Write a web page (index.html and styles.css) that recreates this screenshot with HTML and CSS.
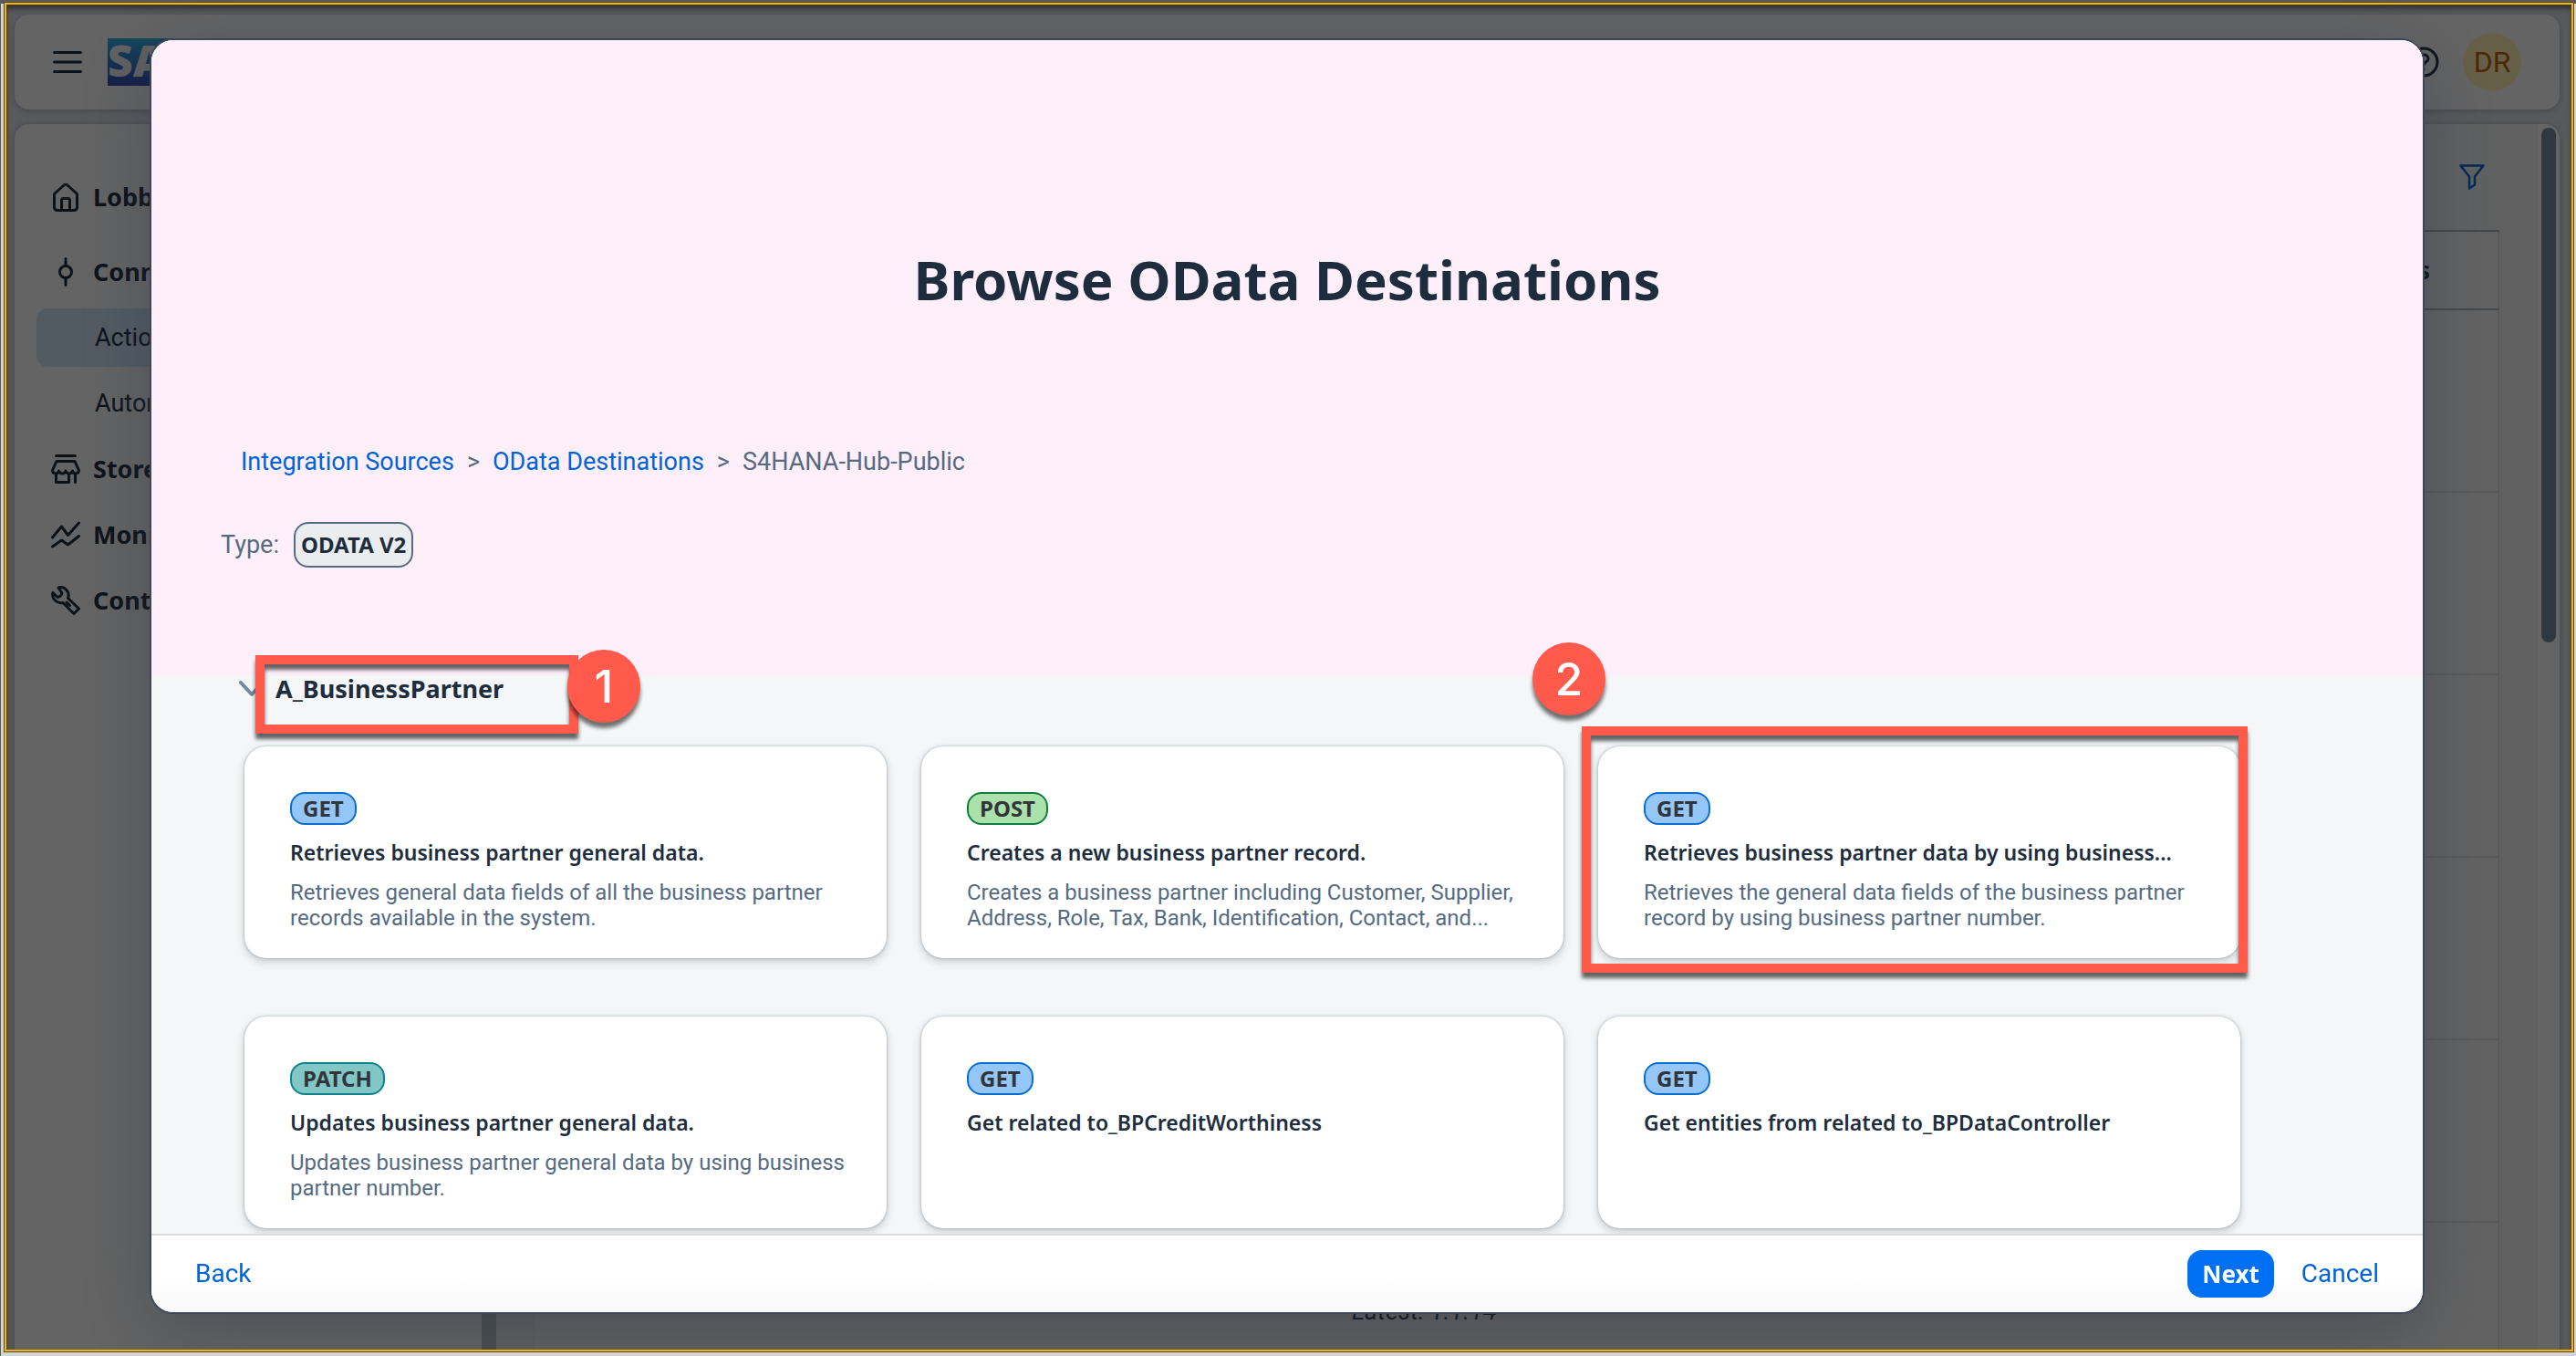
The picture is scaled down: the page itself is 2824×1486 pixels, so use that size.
FILE: index.html
```html
<!DOCTYPE html>
<html lang="en">
<head>
<meta charset="utf-8">
<title>Browse OData Destinations</title>
<link rel="stylesheet" href="styles.css">
</head>
<body>
<div class="app">
  <header class="shell">
    <button class="icon-button" type="button" aria-label="Menu">
      <svg width="32" height="28" viewBox="0 0 32 28" fill="none" stroke="currentColor" stroke-width="3" stroke-linecap="round"><path d="M1.5 3.5h29M1.5 14h29M1.5 24.5h29"/></svg>
    </button>
    <svg class="logo" width="104" height="52" viewBox="0 0 104 52" role="img" aria-label="SAP">
      <defs><linearGradient id="sap" x1="0" y1="0" x2="0" y2="1"><stop offset="0" stop-color="#30b0e8"/><stop offset="1" stop-color="#3048b0"/></linearGradient></defs>
      <path d="M0 0h104L52 52H0z" fill="url(#sap)"/>
      <text x="0" y="42" class="logo-text">SA</text>
    </svg>
    <div class="shell-end">
      <button class="icon-button" type="button" aria-label="Help">
        <svg width="34" height="34" viewBox="0 0 34 34" fill="none" stroke="currentColor" stroke-width="3" stroke-linecap="round"><circle cx="17" cy="17" r="15"/><path d="M12.5 13.500c0-6 9.500-6 9.500 0 0 3.500-5 3.500-5 7M17 24.500v.5"/></svg>
      </button>
      <button class="avatar" type="button">DR</button>
    </div>
  </header>
  <div class="workspace">
    <nav class="side">
      <a class="nav-item nav-home" href="#"><svg class="nav-icon" viewBox="0 0 32 32"><path d="M3.500 12.500 14 3q2-1.500 4 0l10.500 9.500V27q0 3.500-3.500 3.500H7q-3.500 0-3.500-3.500zM11.500 30V19.500q0-2 2-2h5q2 0 2 2V30"/></svg>Lobb</a>
      <a class="nav-item" href="#"><svg class="nav-icon" viewBox="0 0 32 32"><circle cx="16" cy="16" r="6.500"/><path d="M16 1.500v8M16 22.500v8"/></svg>Conn</a>
      <a class="nav-item nav-sub nav-current" href="#">Actio</a>
      <a class="nav-item nav-sub" href="#">Autom</a>
      <a class="nav-item" href="#"><svg class="nav-icon" viewBox="0 0 32 32"><path d="M5.500 1.500h21M6 7.500h20l4.500 10q0 3-3.500 3.500-3 0-3.500-3-1 3-3.700 3T16 18q-1 3-3.700 3T8.500 18q-.500 3-3.500 3-3.500-.500-3.500-3.500zM5.500 21v9.500h14V21M26.500 21v9.500"/></svg>Store</a>
      <a class="nav-item" href="#"><svg class="nav-icon" viewBox="0 0 32 32"><path d="M1.500 19 11.500 7l7 9.500L30.500 3M1.500 29l10-7 7 5L30.500 17.500"/></svg>Moni</a>
      <a class="nav-item" href="#"><svg class="nav-icon" viewBox="0 0 32 32"><path d="M8 2c7-2 13 5 10.500 11.500l12 11.500-5.500 5.500-12-12C7 20 0 14 2 7.500l5 5q4-.500 5-4.500zM17 18l3.500 3.500"/></svg>Cont</a>
    </nav>
    <div class="splitter"></div>
    <main class="content">
      <div class="toolbar">
        <button class="icon-button filter" type="button" aria-label="Filter">
          <svg width="28" height="28" viewBox="0 0 28 28" fill="none" stroke="currentColor" stroke-width="2.500" stroke-linejoin="round"><path d="M1.500 1.500h25L17 13.500v9l-6 4v-13z"/></svg>
        </button>
      </div>
      <table class="grid">
        <thead><tr><th>s</th></tr></thead>
        <tbody>
          <tr><td></td></tr><tr><td></td></tr><tr><td></td></tr><tr><td></td></tr><tr><td></td></tr>
          <tr><td class="latest"><em>Latest: 1.1.14</em></td></tr>
        </tbody>
      </table>
    </main>
    <div class="scroll-track"><div class="scroll-thumb"></div></div>
  </div>
</div>

<div class="backdrop"></div>

<section class="dialog" role="dialog" aria-labelledby="dialog-title">
  <div class="dialog-body">
    <div class="hero">
      <h1 id="dialog-title">Browse OData Destinations</h1>
      <nav class="crumbs" aria-label="Breadcrumb">
        <a href="#">Integration Sources</a><span>&gt;</span><a href="#">OData Destinations</a><span>&gt;</span><span>S4HANA-Hub-Public</span>
      </nav>
      <div class="type"><span>Type:</span><span class="chip">ODATA V2</span></div>
    </div>
    <section class="group">
      <h2><svg width="28" height="18" viewBox="0 0 28 18" fill="none" stroke="currentColor" stroke-width="4" stroke-linecap="round" stroke-linejoin="round"><path d="M2 2l12 13L26 2"/></svg>A_BusinessPartner</h2>
      <div class="cards">
        <article class="card">
          <span class="badge get">GET</span>
          <h3>Retrieves business partner general data.</h3>
          <p>Retrieves general data fields of all the business partner records available in the system.</p>
        </article>
        <article class="card">
          <span class="badge post">POST</span>
          <h3>Creates a new business partner record.</h3>
          <p>Creates a business partner including Customer, Supplier, Address, Role, Tax, Bank, Identification, Contact, and...</p>
        </article>
        <article class="card">
          <span class="badge get">GET</span>
          <h3>Retrieves business partner data by using business...</h3>
          <p>Retrieves the general data fields of the business partner record by using business partner number.</p>
        </article>
        <article class="card">
          <span class="badge patch">PATCH</span>
          <h3>Updates business partner general data.</h3>
          <p>Updates business partner general data by using business partner number.</p>
        </article>
        <article class="card">
          <span class="badge get">GET</span>
          <h3>Get related to_BPCreditWorthiness</h3>
        </article>
        <article class="card">
          <span class="badge get">GET</span>
          <h3>Get entities from related to_BPDataController</h3>
        </article>
      </div>
    </section>
  </div>
  <footer class="dialog-footer">
    <button class="button back" type="button">Back</button>
    <button class="button primary" type="button">Next</button>
    <button class="button" type="button">Cancel</button>
  </footer>
  <div class="mark mark-group"></div>
  <div class="mark mark-card"></div>
  <div class="step step-one">1</div>
  <div class="step step-two">2</div>
</section>

<div class="frame"></div>
</body>
</html>
```
FILE: styles.css
```css
:root {
  --body: Roboto, "Liberation Sans", sans-serif;
  --bold: "Noto Sans", "Open Sans", sans-serif;
  --ink: #1d2d3e;
  --muted: #556b82;
  --link: #0064d9;
  --mark: #ff5a4c;
}

* { box-sizing: border-box; }

html, body { height: 100%; margin: 0; }

body {
  overflow: hidden;
  background: #dce0e6;
  color: var(--ink);
  font: 28px/32px var(--body);
}

button { font: inherit; border: 0; background: none; padding: 0; }
a { color: inherit; text-decoration: none; }
h1, h2, h3, p { margin: 0; }
svg { display: block; flex: none; }

/* Application behind the dialog */
.app {
  height: 100%;
  display: flex;
  flex-direction: column;
  gap: 16px;
  padding: 16px 18px 0 16px;
}

.shell {
  flex: none;
  height: 104px;
  display: flex;
  align-items: center;
  gap: 28px;
  padding: 0 42px;
  border-radius: 16px;
  background: #fafafa;
  box-shadow: 0 2px 6px rgba(34, 53, 72, .25);
}

.icon-button { color: var(--ink); }
.logo-text { font: 800 48px "Open Sans", sans-serif; fill: #f0f2f5; }
.shell-end { margin-left: auto; display: flex; align-items: center; gap: 26px; }

.avatar {
  width: 64px;
  height: 64px;
  border-radius: 50%;
  background: #fff0b4;
  color: #c46210;
  font-size: 32px;
}

.workspace {
  flex: 1;
  min-height: 0;
  overflow: hidden;
  display: flex;
  border-radius: 16px 16px 0 0;
  background: #fafafa;
  box-shadow: 0 0 6px rgba(34, 53, 72, .25);
}

.side {
  flex: none;
  width: 512px;
  padding: 48px 24px;
  display: flex;
  flex-direction: column;
  gap: 8px;
}

.nav-item {
  height: 64px;
  display: flex;
  align-items: center;
  gap: 14px;
  padding-left: 16px;
  border-radius: 12px;
  font: 700 27px/32px var(--bold);
}

.nav-home { margin-bottom: 10px; }
.nav-sub { padding-left: 64px; font: 27px/32px var(--body); }
.nav-current { background: #d0e4f5; }
.nav-icon { width: 32px; height: 32px; fill: none; stroke: currentColor; stroke-width: 3; stroke-linecap: round; stroke-linejoin: round; }

.splitter { flex: none; width: 16px; background: #b8c0c8; }
.content { flex: 1; padding: 0 42px; background: #f0f1f2; }
.toolbar { height: 116px; display: flex; align-items: center; justify-content: flex-end; padding-right: 16px; }
.filter { color: var(--link); }

.grid { width: 100%; border-collapse: collapse; background: #f6f6f6; border-right: 2px solid #dcdfe2; }
.grid th { height: 86px; padding: 0 74px 0 0; text-align: right; font: 700 27px/32px var(--bold); border-block: 2px solid #a8b2bd; }
.grid td { height: 200px; padding: 0; border-bottom: 2px solid #dcdfe2; }
.grid .latest { padding: 81px 0 0 896px; vertical-align: top; font-size: 27px; }

.scroll-track { flex: none; width: 24px; padding: 4px; }
.scroll-thumb { height: 42%; border-radius: 8px; background: #758ca4; }

.backdrop { position: fixed; inset: 0; background: rgba(0, 0, 0, .6); }

/* Dialog */
.dialog {
  position: fixed;
  inset: 44px 168px 48px 166px;
  display: flex;
  flex-direction: column;
  border-radius: 24px;
  background: #fff;
  box-shadow: 0 0 0 2px #3c4857, 0 20px 80px rgba(48, 56, 72, .5);
}

.dialog-body {
  flex: 1;
  min-height: 0;
  overflow: hidden;
  border-radius: 24px 24px 0 0;
  background: #f5f6f7;
}

.hero { height: 696px; padding: 222px 76px 0; background: #ffeffa; color: var(--muted); }
.hero h1 { text-align: center; color: var(--ink); font: 700 60px/80px var(--bold); }

.crumbs { display: flex; gap: 14px; margin-top: 144px; padding-left: 22px; font-size: 27px; }
.crumbs a { color: var(--link); }

.type { display: flex; align-items: center; gap: 16px; margin-top: 50px; font-size: 27px; }
.chip {
  height: 50px;
  padding: 0 6px;
  border: 2px solid var(--muted);
  border-radius: 16px;
  background: #eaecee;
  color: var(--ink);
  font: 700 24px/46px var(--bold);
}

.group { padding: 0 200px 0 102px; }
.group h2 { height: 78px; padding-bottom: 48px; display: flex; align-items: center; gap: 12px; font: 700 27px/32px var(--bold); }
.group h2 svg { color: #7289a1; margin-left: -6px; }

.cards { display: grid; grid-template-columns: repeat(3, 1fr); gap: 64px 38px; }
.card {
  height: 232px;
  padding: 50px 40px 30px 50px;
  border-radius: 24px;
  background: #fff;
  box-shadow: 0 0 3px rgba(34, 53, 72, .35), 0 4px 10px rgba(34, 53, 72, .22);
}
.card h3 { margin-top: 16px; font: 650 23px/28px var(--bold); white-space: nowrap; }
.card p { margin-top: 16px; color: var(--muted); font-size: 24px; line-height: 28px; }

.badge {
  display: block;
  width: fit-content;
  height: 36px;
  padding: 0 12px;
  border: 2px solid;
  border-radius: 16px;
  font: 700 24px/32px var(--bold);
}
.get { background: #94c6f7; border-color: #0a6ed1; }
.post { background: #abe2ab; border-color: #107e3e; }
.patch { background: #80c7c5; border-color: #0f828f; }
.badge { color: #32363a; }

.dialog-footer {
  flex: none;
  height: 86px;
  display: flex;
  align-items: center;
  gap: 14px;
  padding: 0 32px;
  border-top: 2px solid #d9dbdd;
  border-radius: 0 0 24px 24px;
  background: linear-gradient(#fff 50%, #f9f9fa);
}
.button { height: 52px; padding: 0 16px; border-radius: 16px; color: var(--link); }
.back { margin-right: auto; }
.primary { background: #0070f2; color: #fff; font: 700 26px/32px var(--bold); }

/* Tutorial callouts over the dialog */
.mark {
  position: absolute;
  border: 10px solid var(--mark);
  filter: drop-shadow(0 6px 2px rgba(0, 0, 0, .6));
}
.mark-group { left: 114px; top: 674px; width: 354px; height: 86px; }
.mark-card { left: 1568px; top: 752px; width: 730px; height: 270px; }
.step {
  position: absolute;
  width: 80px;
  height: 80px;
  border-radius: 50%;
  background: var(--mark);
  color: #fff;
  font: 500 50px/80px Inter, sans-serif;
  text-align: center;
  box-shadow: 0 6px 4px rgba(0, 0, 0, .55);
}
.step-one { left: 456px; top: 668px; }
.step-two { left: 1514px; top: 660px; }

.frame {
  position: fixed;
  inset: 3px 3px 5px 5px;
  border: 2px solid #ffb400;
  box-shadow: 0 0 0 1px #4a4640, 0 5px 0 4px #d4d4d4, inset 0 5px 5px rgba(0, 0, 0, .4);
  pointer-events: none;
}
```
